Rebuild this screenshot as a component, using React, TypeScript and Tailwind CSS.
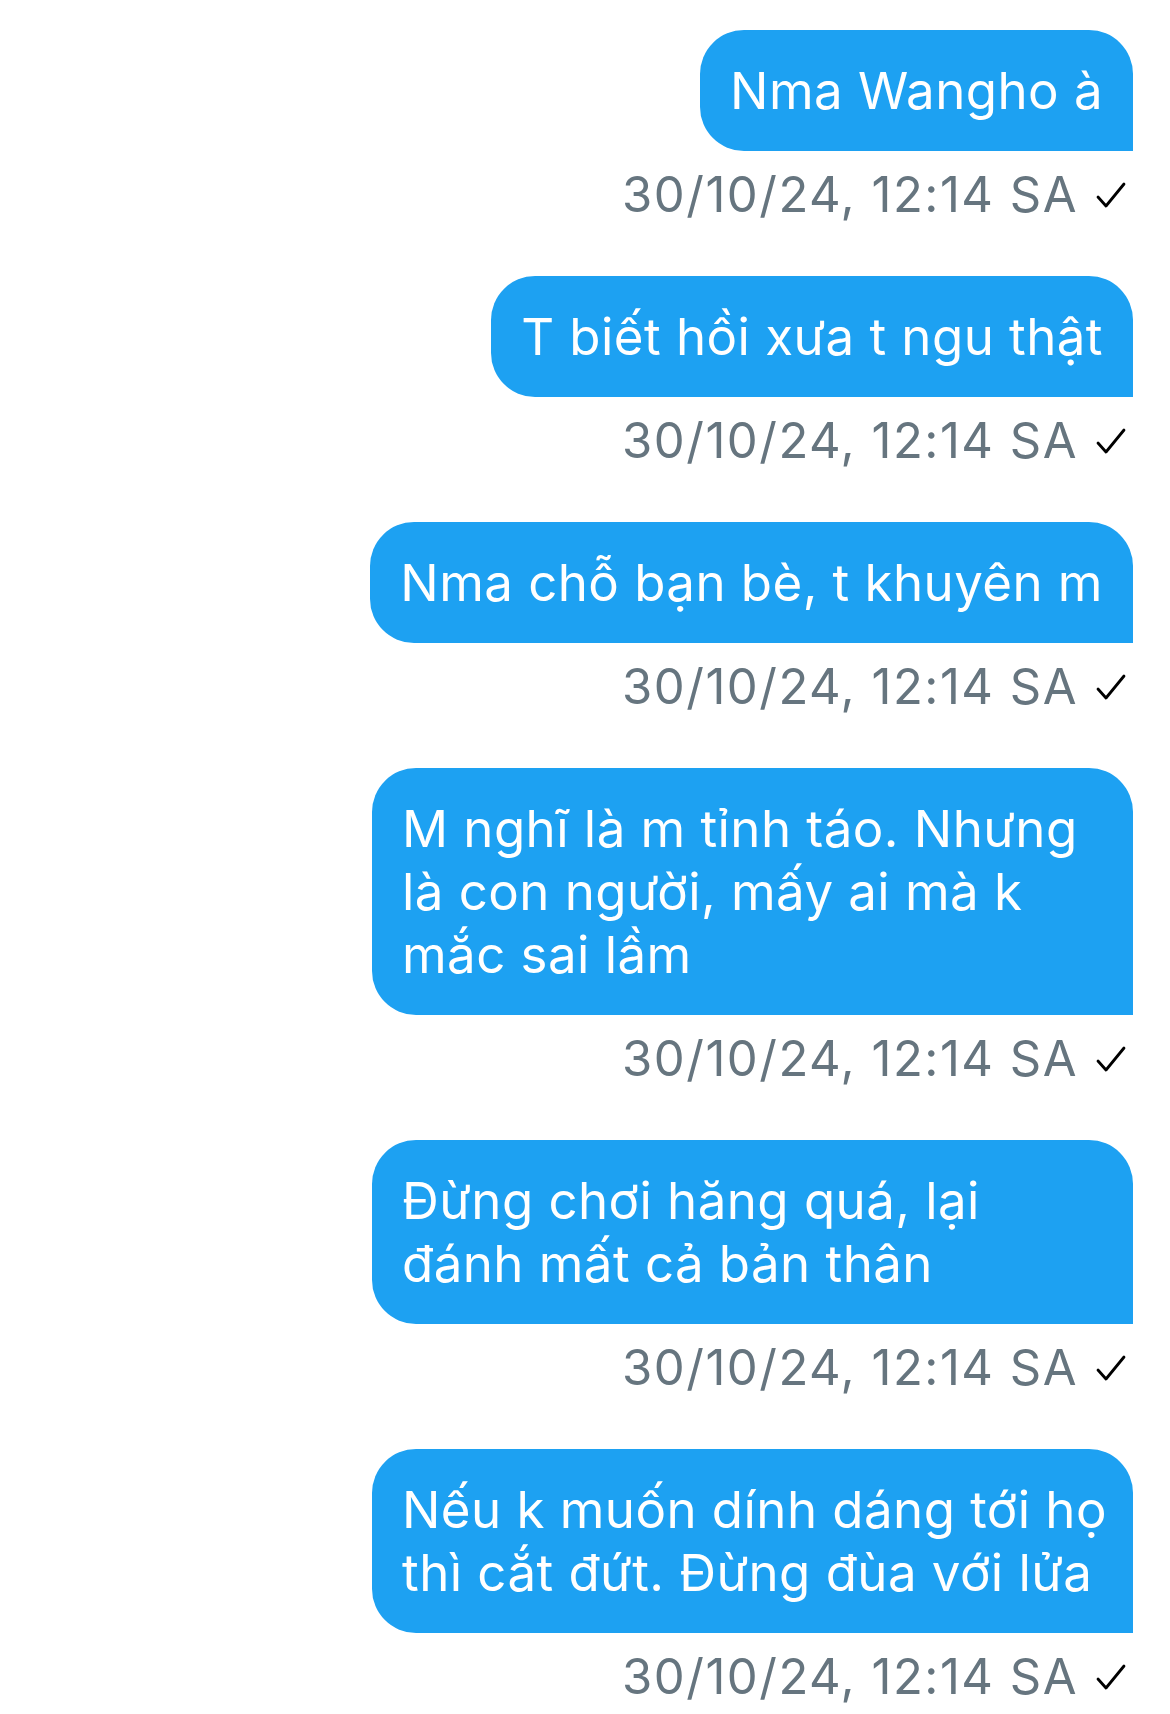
const messages: string[][] = [
  ['Nma Wangho à'],
  ['T biết hồi xưa t ngu thật'],
  ['Nma chỗ bạn bè, t khuyên m'],
  ['M nghĩ là m tỉnh táo. Nhưng', 'là con người, mấy ai mà k', 'mắc sai lầm'],
  ['Đừng chơi hăng quá, lại', 'đánh mất cả bản thân'],
  ['Nếu k muốn dính dáng tới họ', 'thì cắt đứt. Đừng đùa với lửa'],
];

const stamp = '30/10/24, 12:14 SA';

function Check() {
  return (
    <svg width="30" height="30" viewBox="0 0 30 30" className="ml-[18px]">
      <polyline points="2,17 10,26 28,4" fill="none" stroke="#000" strokeWidth="2.8" strokeLinecap="round" strokeLinejoin="round" />
    </svg>
  );
}

function Message({ lines }: { lines: string[] }) {
  const multi = lines.length > 1;
  return (
    <div className="flex flex-col items-end">
      <div
        className={`rounded-[44px] rounded-br-none bg-[#1da1f2] px-[30px] py-[29px] text-[51px] leading-[63px] tracking-[0.45px] text-white ${
          multi ? 'w-[761px]' : ''
        }`}>
        {lines.map((l, i) => (
          <div key={i} className="whitespace-nowrap">
            {l}
          </div>
        ))}
      </div>
      <div className="mt-4 flex h-[56px] items-center pr-[7px] text-[49px] tracking-[1.5px] text-[#66757f]">
        <span>{stamp}</span>
        <Check />
      </div>
    </div>
  );
}

export default function App() {
  return (
    <div
      className="flex min-h-[1714px] w-full flex-col gap-[53px] bg-white pl-[40px] pr-[37px] pt-[30px]"
      style={{ fontFamily: 'Inter, "Noto Sans", sans-serif' }}>
      {messages.map((m, i) => (
        <Message key={i} lines={m} />
      ))}
    </div>
  );
}
